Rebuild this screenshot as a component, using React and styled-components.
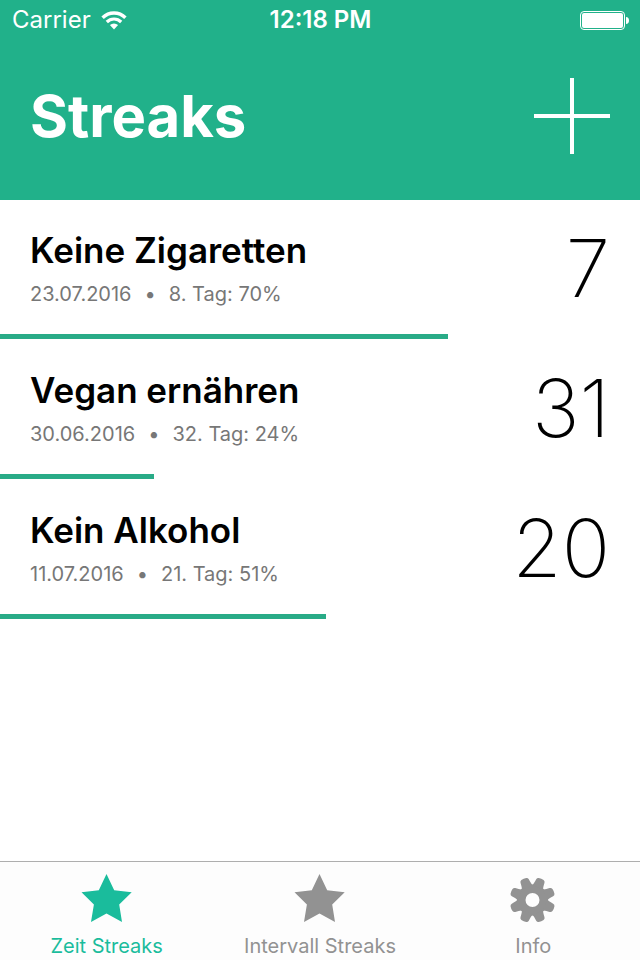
import React, { useState } from "react";
import styled, { createGlobalStyle } from "styled-components";

const GlobalStyle = createGlobalStyle`
  *, *::before, *::after { box-sizing: border-box; }
  body {
    margin: 0;
    background: #fff;
    color: #000;
    font-family: Inter, "Liberation Sans", sans-serif;
  }
`;

const Screen = styled.div`
  display: flex;
  flex-direction: column;
  min-height: 100vh;
`;

const Header = styled.header`
  background: #21b18a;
  color: #fff;
`;

const StatusBar = styled.div`
  display: grid;
  grid-template-columns: 1fr auto 1fr;
  align-items: center;
  height: 40px;
  padding: 0 11px 0 12px;
  font-size: 24px;
  line-height: 40px;
`;

const Carrier = styled.div`
  display: flex;
  align-items: center;
  gap: 10px;
`;

const Clock = styled.time`
  font-weight: 600;
`;

const Battery = styled.svg`
  justify-self: end;
`;

const TitleBar = styled.div`
  display: flex;
  align-items: center;
  justify-content: space-between;
  height: 160px;
  padding: 0 30px 8px;
`;

const Title = styled.h1`
  margin: 0;
  font-size: 58px;
  font-weight: 700;
  line-height: 72px;
`;

const AddButton = styled.button`
  display: flex;
  padding: 0;
  border: 0;
  background: none;
  color: inherit;
  cursor: pointer;
`;

const List = styled.ul`
  flex: 1;
  margin: 0;
  padding: 0;
  list-style: none;
`;

const Row = styled.li`
  display: flex;
  flex-direction: column;
  justify-content: space-between;
  height: 140px;
  padding-bottom: 1px;
`;

const RowBody = styled.div`
  display: flex;
  justify-content: space-between;
  padding: 28px 30px 0;
`;

const Name = styled.h2`
  margin: 0;
  font-size: 35px;
  font-weight: 600;
  line-height: 44px;
`;

const Meta = styled.p`
  display: flex;
  gap: 13px;
  margin: 10px 0 0;
  color: #777;
  font-size: 20px;
  line-height: 24px;
`;

const Count = styled.span`
  font-size: 80px;
  font-weight: 200;
  line-height: 80px;
`;

const Progress = styled.div`
  height: 5px;
  background: #29ab87;
`;

const TabBar = styled.nav`
  display: grid;
  grid-template-columns: repeat(3, 1fr);
  height: 99px;
  border-top: 1px solid #aeaeae;
  background: #fdfdfd;
`;

const Tab = styled.button`
  display: flex;
  flex-direction: column;
  align-items: center;
  gap: 10px;
  padding: 12px 0 0;
  border: 0;
  background: none;
  color: ${(p) => (p.$active ? "#1abc9c" : "#929292")};
  font: inherit;
  font-size: 20px;
  line-height: 24px;
  cursor: pointer;
`;

const WifiIcon = () => (
  <svg width="26" height="19" viewBox="0 0 26 19" fill="none" stroke="currentColor" aria-hidden="true">
    <path d="M1.6 6.7a16 16 0 0 1 22.8 0" strokeWidth="3.4" />
    <path d="M5.8 11a10.2 10.2 0 0 1 14.4 0" strokeWidth="3.2" />
    <path d="M13 18.4 8.9 14.1a6 6 0 0 1 8.2 0Z" fill="currentColor" stroke="none" />
  </svg>
);

const BatteryIcon = () => (
  <Battery width="49" height="19" viewBox="0 0 49 19" fill="currentColor" role="img" aria-label="Battery full">
    <rect x="0.5" y="0.5" width="44" height="18" rx="3.5" fill="none" stroke="currentColor" />
    <rect x="2" y="2" width="41" height="15" rx="2" />
    <path d="M46 6c2 0 3 1.5 3 3.5S48 13 46 13Z" />
  </Battery>
);

const PlusIcon = () => (
  <svg width="76" height="76" viewBox="0 0 76 76" stroke="currentColor" strokeWidth="4" aria-hidden="true">
    <path d="M38 0V76M0 38H76" />
  </svg>
);

const StarIcon = () => (
  <svg width="52" height="50" viewBox="0 0 52 50" fill="currentColor" aria-hidden="true">
    <path d="M25.5 0 33.200 16.200 50.700 18.300 38.200 30.500 41 48 25.500 39.600 10 48 12.900 30.500 0.500 18.300 17.800 16.200Z" />
  </svg>
);

const GearIcon = () => (
  <svg width="52" height="50" viewBox="-25.5 -26 52 50" fill="currentColor" aria-hidden="true">
    <circle r="11.3" fill="none" stroke="currentColor" strokeWidth="8.600" />
    {[0, 1, 2, 3, 4, 5, 6, 7].map((i) => (
      <path
        key={i}
        transform={`rotate(${22.5 + i * 45})`}
        d="M-6-13.500C-4.900-15-4.900-17.500-4.500-20.500Q-4.300-22.200-2.600-22.700Q0-23.300 2.600-22.700Q4.300-22.200 4.500-20.500C4.900-17.500 4.900-15 6-13.500Z"
      />
    ))}
  </svg>
);

const streaks = [
  { name: "Keine Zigaretten", date: "23.07.2016", day: 8, percent: 70, count: 7 },
  { name: "Vegan ernähren", date: "30.06.2016", day: 32, percent: 24, count: 31 },
  { name: "Kein Alkohol", date: "11.07.2016", day: 21, percent: 51, count: 20 },
];

const tabs = [
  { label: "Zeit Streaks", Icon: StarIcon },
  { label: "Intervall Streaks", Icon: StarIcon },
  { label: "Info", Icon: GearIcon },
];

export default function App() {
  const [active, setActive] = useState(0);

  return (
    <Screen>
      <GlobalStyle />
      <Header>
        <StatusBar>
          <Carrier>
            Carrier
            <WifiIcon />
          </Carrier>
          <Clock>12:18 PM</Clock>
          <BatteryIcon />
        </StatusBar>
        <TitleBar>
          <Title>Streaks</Title>
          <AddButton type="button" aria-label="Streak hinzufügen">
            <PlusIcon />
          </AddButton>
        </TitleBar>
      </Header>
      <List>
        {streaks.map((s) => (
          <Row key={s.name}>
            <RowBody>
              <div>
                <Name>{s.name}</Name>
                <Meta>
                  <span>{s.date}</span>
                  <span>•</span>
                  <span>{`${s.day}. Tag: ${s.percent}%`}</span>
                </Meta>
              </div>
              <Count>{s.count}</Count>
            </RowBody>
            <Progress style={{ width: `${s.percent}%` }} />
          </Row>
        ))}
      </List>
      <TabBar>
        {tabs.map(({ label, Icon }, i) => (
          <Tab
            key={label}
            type="button"
            $active={i === active}
            aria-current={i === active ? "page" : undefined}
            onClick={() => setActive(i)}
          >
            <Icon />
            {label}
          </Tab>
        ))}
      </TabBar>
    </Screen>
  );
}
